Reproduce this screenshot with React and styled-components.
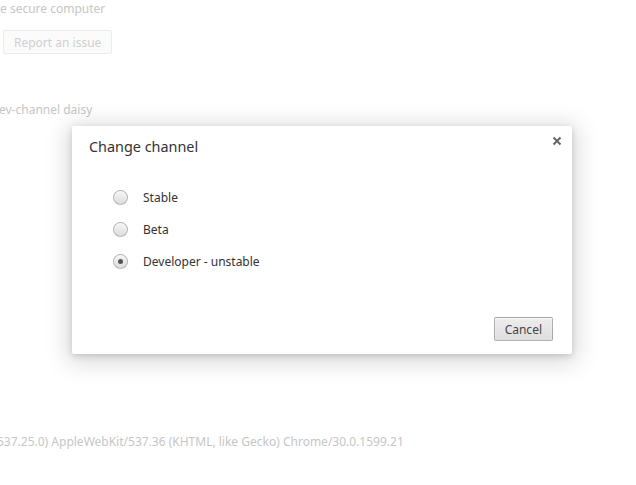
import React, { useState } from "react";
import styled, { createGlobalStyle } from "styled-components";

const GlobalStyle = createGlobalStyle`
  html, body {
    margin: 0;
    padding: 0;
    background: #ffffff;
    font-family: "Noto Sans", "Open Sans", sans-serif;
  }
  #root {
    position: relative;
    width: 636px;
    height: 485px;
    overflow: hidden;
  }
`;

const Page = styled.div`
  display: flex;
  flex-direction: column;
  align-items: flex-start;
  padding-top: 1px;
  color: #c6c6c6;
  font-size: 12px;
  height: 485px;
  box-sizing: border-box;
`;

const FadedLine = styled.div`
  line-height: 16px;
  white-space: nowrap;
  margin-top: ${(p) => p.top || 0}px;
  margin-left: ${(p) => p.shift || 0}px;
`;

const FadedButton = styled.button`
  margin: 13px 0 0 3px;
  height: 24px;
  padding: 0 10px;
  font-family: inherit;
  font-size: 12px;
  color: #cfcfcf;
  background: #fbfbfb;
  border: 1px solid #ececec;
  border-radius: 2px;
`;

const Dialog = styled.div`
  position: absolute;
  left: 72px;
  top: 126px;
  width: 500px;
  height: 228px;
  box-sizing: border-box;
  background: #ffffff;
  border-radius: 2px;
  box-shadow: 0 4px 23px 5px rgba(0, 0, 0, 0.15), 0 2px 6px rgba(0, 0, 0, 0.15);
  display: flex;
  flex-direction: column;
  color: #333333;
`;

const Title = styled.h1`
  margin: 0;
  padding: 11px 17px 0;
  font-size: 14.4px;
  font-weight: normal;
  line-height: 20px;
  color: #333333;
`;

const Close = styled.button`
  position: absolute;
  top: 8px;
  right: 8px;
  width: 14px;
  height: 14px;
  padding: 0;
  border: 0;
  background: transparent;
  display: flex;
  align-items: center;
  justify-content: center;
`;

const Options = styled.div`
  display: flex;
  flex-direction: column;
  gap: 18px;
  padding: 33px 0 0 41px;
  flex: 1;
`;

const Option = styled.label`
  display: flex;
  align-items: center;
  gap: 15px;
  height: 14px;
  font-size: 12px;
  color: #333333;
`;

const Radio = styled.span`
  width: 15px;
  height: 15px;
  box-sizing: border-box;
  border-radius: 50%;
  border: 1px solid rgba(0, 0, 0, 0.22);
  background: linear-gradient(#f4f4f4, #dedede);
  box-shadow: inset 0 1px 1px rgba(255, 255, 255, 0.8);
  display: flex;
  align-items: center;
  justify-content: center;

  &::after {
    content: "";
    width: 5px;
    height: 5px;
    border-radius: 50%;
    background: #555555;
    display: ${(p) => (p.checked ? "block" : "none")};
  }
`;

const Footer = styled.div`
  display: flex;
  justify-content: flex-end;
  padding: 0 19px 13px;
`;

const Button = styled.button`
  height: 24px;
  min-width: 59px;
  padding: 0 10px;
  font-family: inherit;
  font-size: 12px;
  color: #444444;
  background: linear-gradient(#ededed, #dedede);
  border: 1px solid rgba(0, 0, 0, 0.25);
  border-radius: 2px;
  box-shadow: inset 0 1px 2px rgba(255, 255, 255, 0.75);
`;

const channels = ["Stable", "Beta", "Developer - unstable"];

export default function App() {
  const [selected, setSelected] = useState(2);

  return (
    <>
      <GlobalStyle />
      <Page>
        <FadedLine>e secure computer</FadedLine>
        <FadedButton>Report an issue</FadedButton>
        <FadedLine top={48} shift={-1}>ev-channel daisy</FadedLine>
        <FadedLine top={316} shift={-3}>
          537.25.0) AppleWebKit/537.36 (KHTML, like Gecko) Chrome/30.0.1599.21
        </FadedLine>
      </Page>

      <Dialog>
        <Title>Change channel</Title>
        <Close aria-label="Close">
          <svg width="10" height="10" viewBox="0 0 10 10">
            <path d="M1.5 1.5 L8.5 8.5 M8.5 1.5 L1.5 8.5" stroke="#666" strokeWidth="2" />
          </svg>
        </Close>
        <Options>
          {channels.map((name, i) => (
            <Option key={name} onClick={() => setSelected(i)}>
              <Radio checked={selected === i} />
              {name}
            </Option>
          ))}
        </Options>
        <Footer>
          <Button>Cancel</Button>
        </Footer>
      </Dialog>
    </>
  );
}
